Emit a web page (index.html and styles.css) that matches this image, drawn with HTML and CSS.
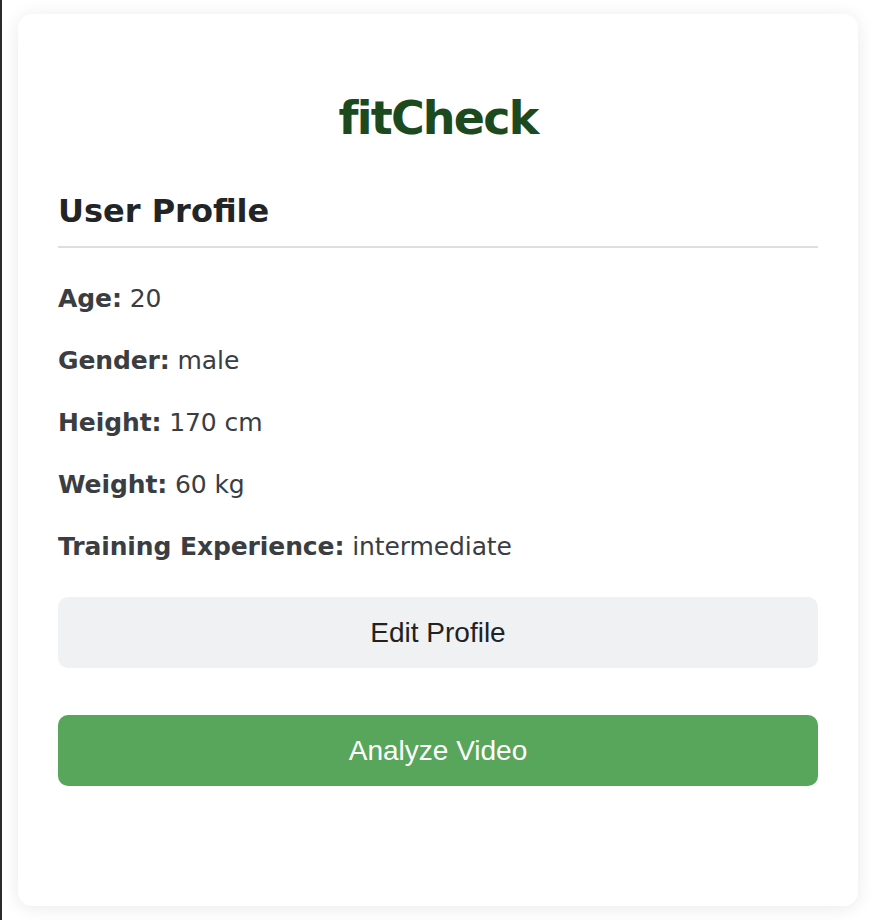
FILE: index.html
```
<!DOCTYPE html>
<html lang="en">
<head>
<meta charset="utf-8">
<title>fitCheck</title>
<link rel="stylesheet" href="styles.css">
</head>
<body>
<main class="card">
  <h1 class="brand">fitCheck</h1>
  <section class="profile">
    <h2 class="profile-title">User Profile</h2>
    <div class="fields">
      <p class="field"><strong>Age:</strong> 20</p>
      <p class="field"><strong>Gender:</strong> male</p>
      <p class="field"><strong>Height:</strong> 170 cm</p>
      <p class="field"><strong>Weight:</strong> 60 kg</p>
      <p class="field"><strong>Training Experience:</strong> intermediate</p>
    </div>
    <div class="actions">
      <button class="btn btn-secondary" type="button">Edit Profile</button>
      <button class="btn btn-primary" type="button">Analyze Video</button>
    </div>
  </section>
</main>
</body>
</html>
```
FILE: styles.css
```
html {
  background: #ffffff;
  border-left: 2px solid #2b2b2b;
  min-height: 100%;
}
body {
  margin: 0;
  padding: 14px 16px 14px 16px;
  font-family: "DejaVu Sans", Verdana, sans-serif;
}
.card {
  background: #ffffff;
  border-radius: 14px;
  box-shadow: 0 2px 18px rgba(0, 0, 0, 0.09);
  padding: 40px 40px 120px;
}
.brand {
  margin: 36px 0 0;
  font-size: 46px;
  line-height: 56px;
  letter-spacing: -1.8px;
  font-weight: bold;
  color: #1c4a1e;
  text-align: center;
}
.profile-title {
  margin: 45px 0 36px;
  padding-bottom: 15px;
  border-bottom: 2px solid #dedede;
  font-size: 32px;
  line-height: 40px;
  font-weight: bold;
  color: #222426;
}
.fields {
  display: flex;
  flex-direction: column;
  gap: 32px;
}
.field {
  margin: 0;
  font-size: 25px;
  line-height: 30px;
  letter-spacing: -0.1px;
  color: #3a3d41;
}
.field strong {
  font-weight: bold;
}
.actions {
  display: flex;
  flex-direction: column;
  gap: 47px;
  margin-top: 35px;
}
.btn {
  display: block;
  width: 100%;
  height: 71px;
  border: none;
  border-radius: 10px;
  font-family: "Liberation Sans", Arial, sans-serif;
  font-size: 28px;
  cursor: pointer;
}
.btn-secondary {
  background: #f0f1f3;
  color: #222222;
}
.btn-primary {
  background: #58a65b;
  color: #ffffff;
}
```
